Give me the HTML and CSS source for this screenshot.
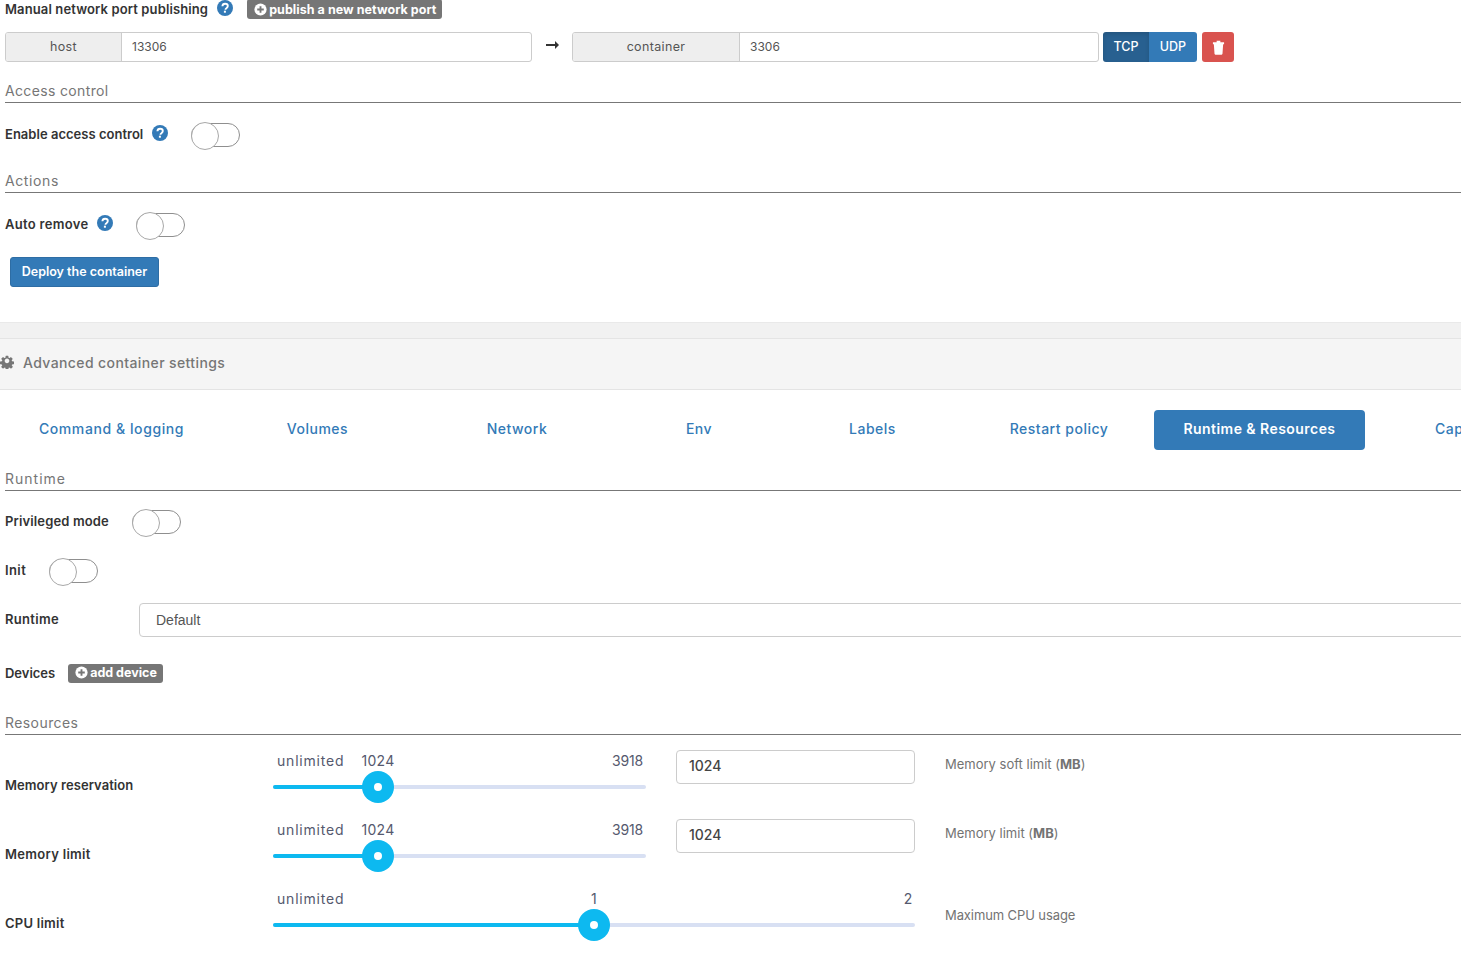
FILE: index.html
```html
<!DOCTYPE html>
<html lang="en">
<head>
<meta charset="utf-8">
<title>Create container</title>
<link rel="stylesheet" href="styles.css">
</head>
<body>
<svg class="defs" width="0" height="0" aria-hidden="true">
  <symbol id="q" viewBox="0 0 16 16"><circle cx="8" cy="8" r="8" fill="#337ab7"/><path d="M5.4 6.2C5.5 4.6 6.6 3.7 8.1 3.7c1.6 0 2.7 1 2.7 2.3 0 1.1-.6 1.6-1.4 2.2-.6.4-.9.8-.9 1.5" fill="none" stroke="#fff" stroke-width="1.9"/><rect x="6.9" y="10.7" width="2" height="2" fill="#fff"/></symbol>
  <symbol id="plus" viewBox="0 0 16 16"><circle cx="8" cy="8" r="6.5" fill="#fff"/><path d="M8 4.5v7M4.5 8h7" stroke="#767676" stroke-width="2"/></symbol>
  <symbol id="trash" viewBox="0 0 14 16"><path d="M1 2.4h12v2H1zM5 .8h4v1.6H5zM2 4.4h10l-.7 10.4c0 .5-.4.9-.9.9H3.600c-.5 0-.9-.4-.9-.9z" fill="#fff"/></symbol>
  <symbol id="gear" viewBox="0 0 1536 1536"><path fill-rule="evenodd" d="M1024 640q0-106-75-181t-181-75-181 75-75 181 75 181 181 75 181-75 75-181zm512 109v222q0 12-8 23t-20 13l-185 28q-19 54-39 91 35 50 107 138 10 12 10 25t-9 23q-27 37-99 108t-94 71q-12 0-26-9l-138-108q-44 23-91 38-16 136-29 186-7 28-36 28h-222q-14 0-24.5-8.5t-11.5-21.5l-28-184q-49-16-90-37l-141 107q-10 9-25 9-14 0-25-11-126-114-165-168-7-10-7-23 0-12 8-23 15-21 51-66.5t54-70.5q-27-50-41-99l-183-27q-13-2-21-12.5t-8-23.5v-222q0-12 8-23t19-13l186-28q14-46 39-92-40-57-107-138-10-12-10-24 0-10 9-23 26-36 98.5-107.5t94.5-71.5q13 0 26 10l138 107q44-23 91-38 16-136 29-186 7-28 36-28h222q14 0 24.5 8.5t11.5 21.5l28 184q49 16 90 37l142-107q9-9 24-9 13 0 25 10 129 119 165 170 7 8 7 22 0 12-8 23-15 21-51 66.5t-54 70.5q26 50 41 98l183 28q13 2 21 12.5t8 23.5z" fill="#767676"/></symbol>
</svg>

<main class="page">
  <div class="sec">
    <div class="publish">
      <span class="label">Manual network port publishing</span>
      <svg class="qi q-pub"><use href="#q"/></svg>
      <span class="gbtn gbtn-pub"><svg class="pi"><use href="#plus"/></svg>publish a new network port</span>
    </div>
    <div class="ports">
      <div class="igroup">
        <span class="addon addon-host">host</span>
        <span class="ival">13306</span>
      </div>
      <svg class="arrow" viewBox="0 0 13 8"><path d="M0 3h9V0l4 4-4 4V5H0z" fill="#333"/></svg>
      <div class="igroup">
        <span class="addon addon-cont">container</span>
        <span class="ival">3306</span>
      </div>
      <div class="proto">
        <span class="pbtn active">TCP</span><span class="pbtn pbtn-udp">UDP</span>
      </div>
      <span class="del"><svg class="ti"><use href="#trash"/></svg></span>
    </div>

    <h3 class="title t-access">Access control</h3>
    <div class="trow">
      <span class="label l-enable">Enable access control</span>
      <svg class="qi q-acc"><use href="#q"/></svg>
      <span class="toggle tg-acc"></span>
    </div>

    <h3 class="title t-actions">Actions</h3>
    <div class="trow">
      <span class="label l-auto">Auto remove</span>
      <svg class="qi q-acc"><use href="#q"/></svg>
      <span class="toggle tg-acc"></span>
    </div>
    <span class="deploy">Deploy the container</span>
  </div>

  <div class="band"></div>
  <div class="adv">
    <svg class="gear"><use href="#gear"/></svg>
    <span>Advanced container settings</span>
  </div>

  <nav class="tabs">
    <a class="tab tab-first">Command &amp; logging</a>
    <a class="tab">Volumes</a>
    <a class="tab">Network</a>
    <a class="tab">Env</a>
    <a class="tab">Labels</a>
    <a class="tab">Restart policy</a>
    <a class="tab tab-on">Runtime &amp; Resources</a>
    <a class="tab tab-cap">Capabilities</a>
  </nav>

  <div class="sec">
    <h3 class="title t-runtime">Runtime</h3>
    <div class="trow mt19">
      <span class="label l-priv">Privileged mode</span>
      <span class="toggle tg-priv"></span>
    </div>
    <div class="trow mt25">
      <span class="label l-init">Init</span>
      <span class="toggle tg-init"></span>
    </div>
    <div class="rt">
      <span class="label rt-label">Runtime</span>
      <span class="select">Default</span>
    </div>
    <div class="dev">
      <span class="label l-dev">Devices</span>
      <span class="gbtn gbtn-dev"><svg class="pi"><use href="#plus"/></svg>add device</span>
    </div>

    <h3 class="title t-res">Resources</h3>
    <div class="res">
      <span class="label res-label l-mr">Memory reservation</span>
      <div class="slider">
        <span class="sl sl-min">unlimited</span>
        <span class="sl sl-cur" style="left:105px">1024</span>
        <span class="sl sl-max">3918</span>
        <div class="track"><div class="fill" style="width:105px"></div></div>
        <span class="handle" style="left:105px"></span>
      </div>
      <span class="num">1024</span>
      <span class="hint">Memory soft limit (<b>MB</b>)</span>
    </div>
    <div class="res">
      <span class="label res-label l-ml">Memory limit</span>
      <div class="slider">
        <span class="sl sl-min">unlimited</span>
        <span class="sl sl-cur" style="left:105px">1024</span>
        <span class="sl sl-max">3918</span>
        <div class="track"><div class="fill" style="width:105px"></div></div>
        <span class="handle" style="left:105px"></span>
      </div>
      <span class="num">1024</span>
      <span class="hint">Memory limit (<b>MB</b>)</span>
    </div>
    <div class="res">
      <span class="label res-label l-cpu">CPU limit</span>
      <div class="slider slider-wide">
        <span class="sl sl-min">unlimited</span>
        <span class="sl sl-cur" style="left:321px">1</span>
        <span class="sl sl-max">2</span>
        <div class="track"><div class="fill" style="width:321px"></div></div>
        <span class="handle" style="left:321px"></span>
      </div>
      <span class="hint hint-cpu">Maximum CPU usage</span>
    </div>
  </div>
</main>
</body>
</html>
```
FILE: styles.css
```css
* { box-sizing: border-box; }
html, body { margin: 0; height: 100%; overflow: hidden; background: #fff; }
body { font-family: Inter, "Noto Sans", "Liberation Sans", sans-serif; font-size: 13px; color: #333; }
.defs { position: absolute; }
.page { width: 1461px; }
.sec { padding-left: 5px; }

.label { font-weight: 600; font-size: 13px; color: #333; letter-spacing: .12px; white-space: nowrap; }
.l-enable { letter-spacing: .02px; }
.l-auto { letter-spacing: .3px; }
.l-priv { letter-spacing: .14px; }
.l-init { letter-spacing: .4px; }
.l-dev { letter-spacing: -.02px; }
.l-mr { letter-spacing: .06px; }
.l-ml { letter-spacing: .3px; }
.l-cpu { letter-spacing: .25px; }

.publish { display: flex; align-items: center; height: 20px; }
.publish .label { position: relative; top: -1px; }
.qi { width: 16px; height: 16px; flex: none; }
.q-pub { margin: -4px 0 0 9px; }
.gbtn { display: inline-flex; align-items: center; background: #767676; color: #fff; font-weight: 700; border-radius: 3px; white-space: nowrap; }
.gbtn-pub { height: 20px; margin: -2px 0 0 14px; padding: 0 6px; font-size: 12.5px; letter-spacing: .05px; }
.gbtn-dev { height: 19px; margin-left: 13px; padding: 0 6px 2px; font-size: 12.5px; letter-spacing: 0; }
.pi { width: 15px; height: 15px; margin-right: 1px; flex: none; }

.ports { display: flex; align-items: center; margin-top: 12px; height: 30px; }
.igroup { display: flex; width: 527px; height: 30px; border: 1px solid #ccc; border-radius: 3px; overflow: hidden; flex: none; }
.addon { background: #eee; border-right: 1px solid #ccc; display: flex; align-items: center; justify-content: center; padding-bottom: 2px; font-size: 12.5px; color: #555; letter-spacing: .35px; flex: none; }
.addon-host { width: 116px; }
.addon-cont { width: 167px; }
.ival { display: flex; align-items: center; padding: 0 0 2px 10px; font-size: 12px; color: #555; }
.arrow { width: 13px; height: 8px; margin: -4px 13px 0 14px; flex: none; }
.proto { display: flex; margin-left: 4px; height: 30px; }
.pbtn { display: flex; align-items: center; justify-content: center; width: 48px; padding-bottom: 1px; background: #337ab7; color: #fff; font-size: 12.5px; font-weight: 500; border-radius: 0 3px 3px 0; }
.pbtn.active { width: 46px; background: #286090; box-shadow: inset 0 2px 4px rgba(0,0,0,.13); border-radius: 3px 0 0 3px; }
.del { display: flex; align-items: center; justify-content: center; width: 32px; height: 30px; margin-left: 5px; background: #d9534f; border-radius: 3px; }
.ti { width: 13px; height: 15px; }

.title { margin: 0; height: 23px; line-height: 22px; font-size: 14px; font-weight: 400; color: #767676; border-bottom: 1px solid #777; letter-spacing: .3px; }
.t-access { margin-top: 18px; letter-spacing: .35px; }
.t-actions { margin-top: 23px; letter-spacing: .6px; }
.t-runtime { margin-top: 18px; letter-spacing: 1px; }
.t-res { margin-top: 29px; letter-spacing: .42px; }

.trow { display: flex; align-items: center; height: 24px; margin-top: 20px; }
.trow .label, .dev .label { padding-bottom: 2px; }
.mt19 { margin-top: 19px; }
.mt25 { margin-top: 25px; }
.q-acc { margin: -4px 0 0 9px; }
.toggle { position: relative; display: block; width: 49px; height: 24px; border: 1px solid #8f8f8f; border-radius: 12px; background: #fff; flex: none; }
.toggle::before { content: ""; position: absolute; left: -1px; top: -2px; width: 26px; height: 26px; border: 1px solid #a8a8a8; border-radius: 50%; background: #fff; }
.tg-acc { margin-left: 23px; }
.tg-priv { margin-left: 23px; }
.tg-init { margin-left: 23px; }

.deploy { display: flex; align-items: center; justify-content: center; width: 149px; height: 30px; margin: 20px 0 0 5px; padding-bottom: 2px; background: #337ab7; color: #fff; border: 1px solid #2e6da4; border-radius: 3px; font-size: 12.5px; font-weight: 600; }

.band { height: 16px; margin-top: 35px; background: #f1f1f1; border-top: 1px solid #e9e9e9; }
.adv { display: flex; align-items: center; height: 52px; padding-bottom: 4px; background: #f5f5f5; border-top: 1px solid #e4e4e4; border-bottom: 1px solid #e4e4e4; color: #767676; font-size: 14px; font-weight: 500; letter-spacing: .39px; }
.gear { width: 14px; height: 14px; margin-right: 9px; }

.tabs { display: grid; grid-template-columns: 218px 199px 200px 164px 183px 190px 211px 96px; margin-top: 20px; width: 1461px; height: 40px; }
.tab { display: flex; align-items: center; justify-content: center; padding-bottom: 3px; color: #337ab7; font-size: 14px; font-weight: 500; letter-spacing: .5px; white-space: nowrap; }
.tab-first { padding-left: 5px; letter-spacing: .58px; }
.tab-on { background: #337ab7; color: #fff; border-radius: 4px; font-weight: 600; letter-spacing: .45px; }
.tab-cap { justify-content: flex-start; padding-left: 70px; overflow: hidden; }

.rt { display: flex; align-items: flex-start; height: 34px; margin-top: 20px; }
.rt-label { width: 134px; margin-top: 8px; letter-spacing: .3px; flex: none; }
.select { display: flex; align-items: center; width: 1400px; height: 34px; padding-left: 16px; border: 1px solid #ccc; border-radius: 4px; font-family: "Liberation Sans", Arial, sans-serif; font-size: 14px; color: #555; flex: none; }

.dev { display: flex; align-items: center; height: 19px; margin-top: 27px; }

.res { display: flex; align-items: flex-start; height: 69px; }
.title + .res { margin-top: 15px; }
.res-label { width: 268px; margin-top: 27px; flex: none; }
.slider { position: relative; width: 373px; height: 60px; padding-top: 35px; flex: none; }
.slider-wide { width: 642px; }
.sl { position: absolute; top: 2px; font-size: 14px; line-height: 18px; color: #55596e; letter-spacing: .3px; white-space: nowrap; }
.sl-min { left: 4px; letter-spacing: .8px; }
.sl-cur { transform: translateX(-50%); }
.sl-max { right: 3px; letter-spacing: -.2px; }
.track { height: 4px; background: #d8e0f3; border-radius: 2px; }
.fill { height: 4px; background: #0db9f0; border-radius: 2px; }
.handle { position: absolute; top: 21px; width: 32px; height: 32px; margin-left: -16px; border-radius: 50%; background: #0db9f0; }
.handle::after { content: ""; position: absolute; left: 12px; top: 12px; width: 8px; height: 8px; border-radius: 50%; background: #fff; }
.num { display: flex; align-items: center; width: 239px; height: 34px; margin-left: 30px; padding: 0 0 3px 12px; border: 1px solid #ccc; border-radius: 4px; font-size: 14px; font-weight: 500; color: #444; flex: none; }
.hint { margin: 6px 0 0 30px; font-size: 13px; line-height: 17px; color: #737373; white-space: nowrap; }
.hint-cpu { margin-top: 19px; letter-spacing: -.1px; }
```
